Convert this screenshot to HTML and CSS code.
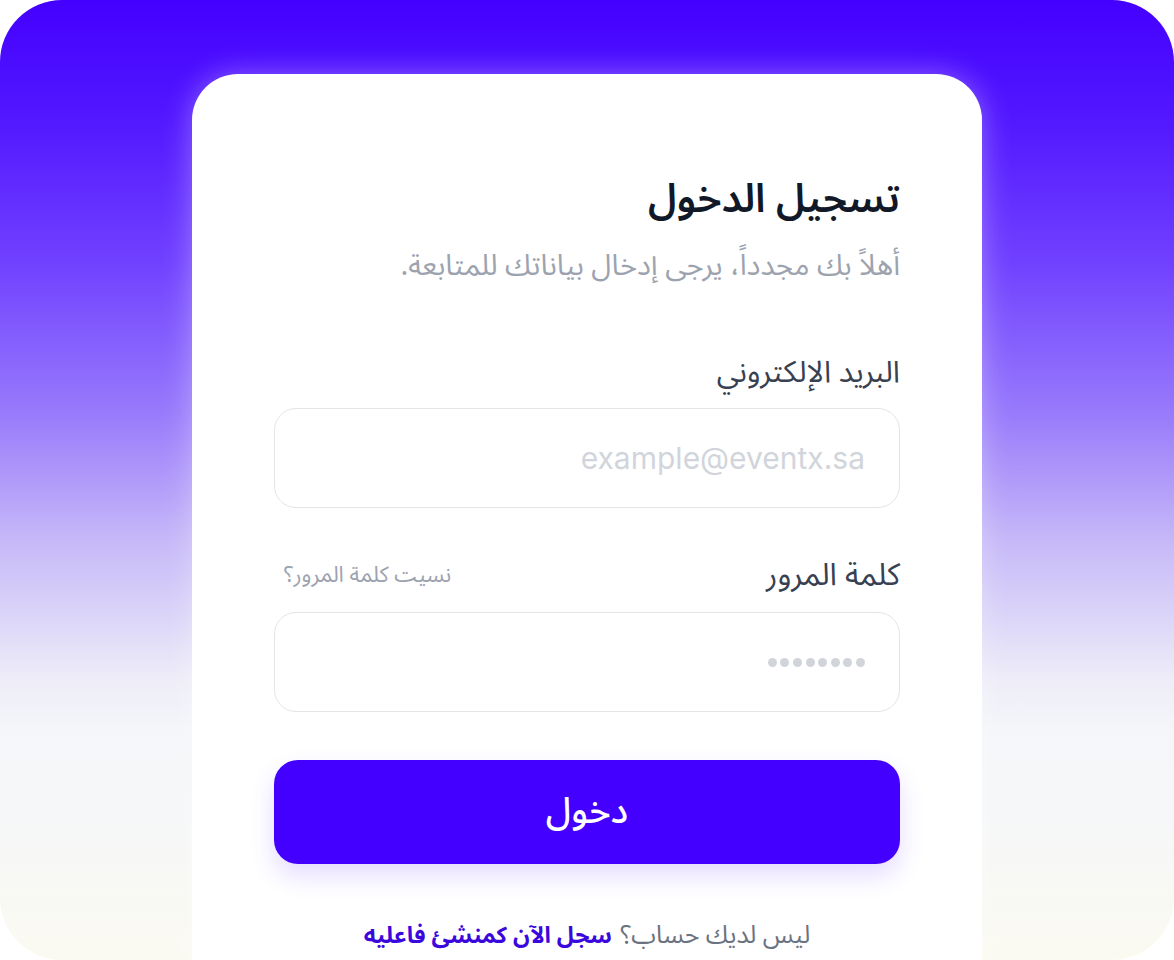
FILE: index.html
```html
<!DOCTYPE html>
<html lang="ar" dir="rtl">
<head>
<meta charset="utf-8">
<title>تسجيل الدخول</title>
<link rel="stylesheet" href="styles.css">
</head>
<body>
<div class="frame">
  <main class="card">
    <h1 class="title">تسجيل الدخول</h1>
    <p class="subtitle">أهلاً بك مجدداً، يرجى إدخال بياناتك للمتابعة.</p>

    <div class="field">
      <div class="label-row">
        <label class="label">البريد الإلكتروني</label>
      </div>
      <div class="input"><span class="placeholder email" dir="ltr">example@eventx.sa</span></div>
    </div>

    <div class="field">
      <div class="label-row">
        <label class="label">كلمة المرور</label>
        <a class="forgot">نسيت كلمة المرور؟</a>
      </div>
      <div class="input"><span class="dots"><i></i><i></i><i></i><i></i><i></i><i></i><i></i><i></i></span></div>
    </div>

    <button class="btn">دخول</button>

    <p class="footer">ليس لديك حساب؟ <a class="signup">سجل الآن كمنشئ فاعليه</a></p>
  </main>
</div>
</body>
</html>
```

FILE: styles.css
```css
* { box-sizing: border-box; }
html, body { margin: 0; padding: 0; background: #ffffff; }
body {
  width: 1174px;
  height: 960px;
  overflow: hidden;
  font-family: "Noto Sans Arabic", "Noto Sans", "DejaVu Sans", sans-serif;
}
.frame {
  width: 1174px;
  height: 960px;
  border-radius: 62px;
  overflow: hidden;
  padding-top: 74px;
  display: flex;
  justify-content: center;
  background: linear-gradient(180deg,
    #4400ff 0px,
    #5218ff 120px,
    #7040ff 260px,
    #9a7dfb 420px,
    #c6b8f8 540px,
    #dcd6f8 620px,
    #eeedf8 680px,
    #f4f6f9 730px,
    #f6f7f8 820px,
    #fbfaf1 960px);
}
.card {
  width: 790px;
  height: 960px;
  background: #ffffff;
  border-radius: 46px 46px 0 0;
  padding: 100px 82px 0 82px;
  box-shadow: 0 0 30px rgba(255, 255, 255, 0.35);
  display: flex;
  flex-direction: column;
}
.title {
  margin: 0;
  font-size: 40px;
  line-height: 52px;
  font-weight: 600;
  color: #111827;
}
.subtitle {
  margin: 20px 0 0 0;
  font-size: 29px;
  line-height: 40px;
  color: #9ca3af;
}
.field { margin-top: 66px; }
.field + .field { margin-top: 47px; }
.label-row {
  display: flex;
  justify-content: space-between;
  align-items: center;
  height: 40px;
}
.label {
  font-size: 30px;
  color: #374151;
}
.field + .field .label { font-size: 31px; }
.forgot {
  font-size: 22px;
  color: #9ca3af;
  margin-left: 10px;
}
.input {
  margin-top: 16px;
  height: 100px;
  border: 1.5px solid #e3e5e8;
  border-radius: 22px;
  display: flex;
  align-items: center;
  padding: 0 34px;
  background: #ffffff;
}
.field + .field .input { margin-top: 17px; }
.placeholder.email {
  font-family: "Inter", "Open Sans", "Noto Sans", sans-serif;
  font-size: 30px;
  color: #d1d5db;
  font-weight: 400;
}
.dots {
  display: flex;
  gap: 3.6px;
}
.dots i {
  width: 9px;
  height: 9px;
  border-radius: 50%;
  background: #d1d5db;
}
.btn {
  margin-top: 48px;
  height: 104px;
  border: none;
  border-radius: 24px;
  background: #4400ff;
  color: #ffffff;
  font-family: inherit;
  font-size: 36px;
  font-weight: 500;
  box-shadow: 0 12px 26px rgba(68, 0, 255, 0.14);
}
.footer {
  margin: 53px 0 0 0;
  line-height: 36px;
  text-align: center;
  font-size: 25px;
  color: #6b7280;
}
.signup {
  color: #3a08dd;
  font-size: 23px;
  font-weight: 700;
  margin-right: 2px;
}
```
